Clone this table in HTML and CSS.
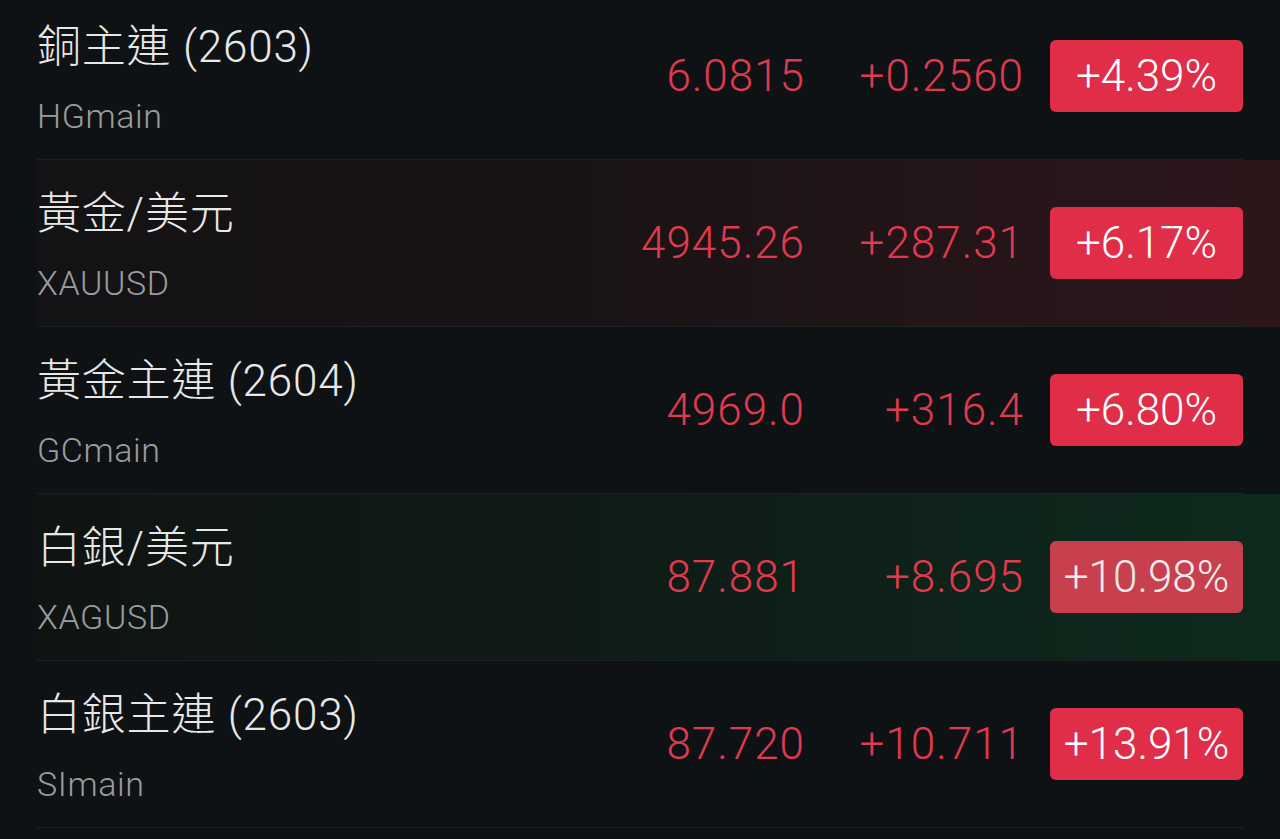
FILE: index.html
```html
<!DOCTYPE html>
<html lang="zh-Hant">
<head>
<meta charset="utf-8">
<title>Quotes</title>
<link rel="stylesheet" href="styles.css">
</head>
<body>
<div class="list">
  <div class="row">
    <div class="row-body">
      <div class="names">
        <div class="title">銅主連 (2603)</div>
        <div class="code">HGmain</div>
      </div>
      <div class="price">6.0815</div>
      <div class="change">+0.2560</div>
      <div class="badge">+4.39%</div>
    </div>
  </div>
  <div class="row row-up">
    <div class="row-body">
      <div class="names">
        <div class="title">黃金/美元</div>
        <div class="code">XAUUSD</div>
      </div>
      <div class="price">4945.26</div>
      <div class="change">+287.31</div>
      <div class="badge">+6.17%</div>
    </div>
  </div>
  <div class="row">
    <div class="row-body">
      <div class="names">
        <div class="title">黃金主連 (2604)</div>
        <div class="code">GCmain</div>
      </div>
      <div class="price">4969.0</div>
      <div class="change">+316.4</div>
      <div class="badge">+6.80%</div>
    </div>
  </div>
  <div class="row row-down">
    <div class="row-body">
      <div class="names">
        <div class="title">白銀/美元</div>
        <div class="code">XAGUSD</div>
      </div>
      <div class="price">87.881</div>
      <div class="change">+8.695</div>
      <div class="badge badge-muted">+10.98%</div>
    </div>
  </div>
  <div class="row">
    <div class="row-body">
      <div class="names">
        <div class="title">白銀主連 (2603)</div>
        <div class="code">SImain</div>
      </div>
      <div class="price">87.720</div>
      <div class="change">+10.711</div>
      <div class="badge">+13.91%</div>
    </div>
  </div>
</div>
</body>
</html>
```

FILE: styles.css
```css
html, body {
  margin: 0;
  padding: 0;
  background: #0f1214;
  height: 100%;
  overflow: hidden;
}

body {
  font-family: Roboto, "Noto Sans CJK TC", sans-serif;
  font-weight: 300;
  color: #e6e6e6;
}

.list {
  margin-top: -7px;
}

.row {
  margin-left: 37px;
}

.row-up {
  background: linear-gradient(90deg, #131214 0%, #1a1315 45%, #2c161b 100%);
}

.row-down {
  background: linear-gradient(90deg, #0f1413 0%, #0f1b16 45%, #0e2a1d 100%);
}

.row-body {
  margin-right: 37px;
  height: 166px;
  border-bottom: 1px solid #1c2124;
  display: grid;
  grid-template-columns: 1fr 200px 219px 219px;
  align-items: center;
}

.names {
  align-self: start;
  padding-top: 26px;
}

.title {
  font-size: 44px;
  line-height: 56px;
  letter-spacing: 0.8px;
  color: #e8e8e8;
  white-space: nowrap;
}

.code {
  margin-top: 20px;
  font-size: 34px;
  line-height: 42px;
  letter-spacing: 0.6px;
  color: #9a9c9f;
}

.price,
.change {
  text-align: right;
  font-size: 44px;
  line-height: 56px;
  letter-spacing: 1px;
  color: #e03a50;
  white-space: nowrap;
}

.badge {
  margin-left: 26px;
  width: 193px;
  height: 72px;
  border-radius: 6px;
  background: #e02e48;
  color: #ffffff;
  font-size: 44px;
  line-height: 72px;
  text-align: center;
  white-space: nowrap;
}

.badge-muted {
  background: #c8404e;
  color: #f4ecec;
}
```
